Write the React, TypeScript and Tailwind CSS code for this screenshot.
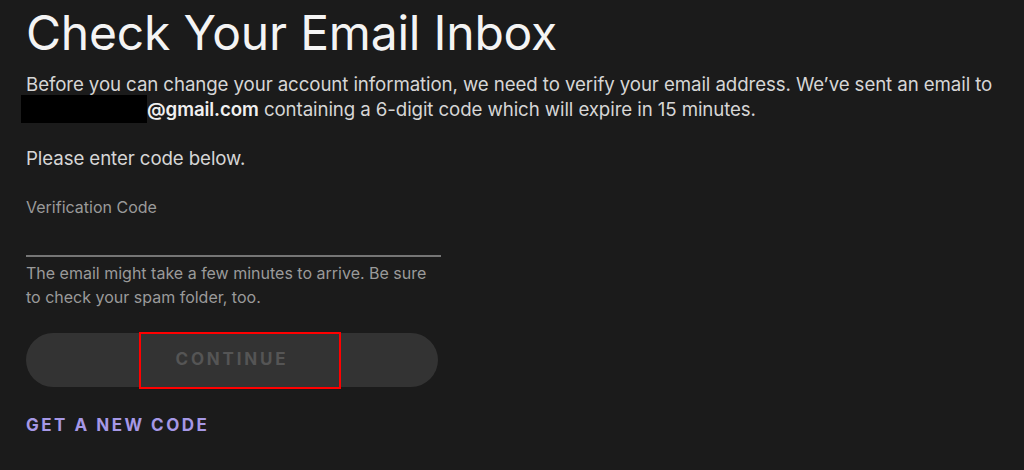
import React from "react";

export default function App() {
  return (
    <div
      className="w-[1024px] h-[470px] bg-[#1b1b1b] overflow-hidden pl-[26px] pt-[5px]"
      style={{ fontFamily: "Inter, 'Liberation Sans', sans-serif" }}
    >
      <h1 className="text-[48px] leading-[56px] text-[#f4f4f4] font-normal tracking-[-0.2px]">
        Check Your Email Inbox
      </h1>
      <p className="mt-[11px] text-[18.7px] leading-[25px] text-[#d6d6d6] w-[990px] tracking-[-0.1px]">
        Before you can change your account information, we need to verify your email address. We’ve sent an email to
        <br />
        <span className="relative">
          <span className="inline-block w-[126px] h-[28px] bg-black align-middle -ml-[5px] -mt-[4px]" />
          <span className="font-semibold text-[#f0f0f0]">@gmail.com</span>
        </span>{" "}
        containing a 6-digit code which will expire in 15 minutes.
      </p>
      <p className="mt-[23px] text-[18.7px] leading-[25px] text-[#d6d6d6] tracking-[-0.1px]">Please enter code below.</p>
      <div className="mt-[25px] w-[415px]">
        <div className="text-[16px] leading-[22px] text-[#9a9a9a]">Verification Code</div>
        <div className="h-[39px] border-b-[2px] border-[#767676]" />
        <p className="mt-[4px] text-[16px] leading-[24px] text-[#9a9a9a]">
          The email might take a few minutes to arrive. Be sure to check your spam folder, too.
        </p>
      </div>
      <div className="relative mt-[24px] w-[412px] h-[54px] rounded-full bg-[#333333] flex items-center justify-center">
        <span className="text-[17px] font-bold tracking-[2.8px] text-[#555555]">CONTINUE</span>
        <div className="absolute left-[113px] top-[-1px] w-[202px] h-[57px] border-2 border-[#ff0000]" />
      </div>
      <div className="mt-[26px] text-[17px] font-bold tracking-[2.5px] text-[#a698e6]">GET A NEW CODE</div>
    </div>
  );
}
